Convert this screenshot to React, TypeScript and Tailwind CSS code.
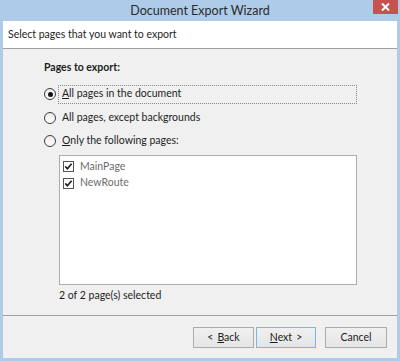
import React from "react";

const font = { fontFamily: 'Lato, "Open Sans", sans-serif' };

function Radio({ checked }: { checked?: boolean }) {
  return (
    <span className="w-[12px] h-[12px] rounded-full border border-[#3c3c3c] bg-gradient-to-b from-[#ececec] to-[#ffffff] flex items-center justify-center shrink-0">
      {checked && <span className="w-[5px] h-[5px] rounded-full bg-[#111111]" />}
    </span>
  );
}

function Check() {
  return (
    <span className="w-[11px] h-[11px] border border-[#555555] bg-white flex items-center justify-center shrink-0">
      <svg width="9" height="9" viewBox="0 0 9 9">
        <path d="M1.3 4.4 L3.4 6.7 L7.6 1.8" fill="none" stroke="#1a1a1a" strokeWidth="1.6" />
      </svg>
    </span>
  );
}

export default function App() {
  return (
    <div className="w-[400px] h-[361px] bg-[#aecbea] flex flex-col text-[10.5px] text-[#1e1e1e]" style={font}>
      <div className="h-[21px] relative flex items-center justify-center">
        <span className="text-[12.5px] text-[#2b2b2b] leading-none mt-[1px]">Document Export Wizard</span>
        <div className="absolute right-[2px] top-0 w-[25px] h-[14px] bg-[#c75050] flex items-center justify-center">
          <svg width="9" height="8" viewBox="0 0 9 8">
            <path d="M1 0.5 L8 7.5 M8 0.5 L1 7.5" stroke="white" strokeWidth="2" />
          </svg>
        </div>
      </div>
      <div className="flex-1 mx-[3px] mb-[3px] bg-[#f0f0f0] flex flex-col">
        <div className="h-[28px] bg-white border-b border-[#a0a0a0] flex items-center pl-[5px]">
          <span>Select pages that you want to export</span>
        </div>
        <div className="flex-1 flex flex-col pl-[41px] pr-[40px] pt-[10px]">
          <div className="font-bold h-[16px] leading-[16px]">Pages to export:</div>
          <div className="mt-[9.5px] flex flex-col gap-[4.5px]">
            <div className="flex items-center gap-[2px] h-[19px]">
              <Radio checked />
              <span className="flex-1 border border-dotted border-[#888] h-[19px] flex items-center pl-[3px]">
                <span><u>A</u>ll pages in the document</span>
              </span>
            </div>
            <div className="flex items-center gap-[6px] h-[19px]">
              <Radio />
              <span>All pa<u>g</u>es, except backgrounds</span>
            </div>
            <div className="flex items-center gap-[6px] h-[19px]">
              <Radio />
              <span><u>O</u>nly the following pages:</span>
            </div>
          </div>
          <div className="ml-[15px] mt-[4.5px] h-[130px] bg-white border border-[#abadb3] flex flex-col pt-[5px] pl-[3px] gap-[5.5px]">
            <div className="flex items-center gap-[6px] h-[11px]">
              <Check />
              <span className="text-[#6d6d6d]">MainPage</span>
            </div>
            <div className="flex items-center gap-[6px] h-[11px]">
              <Check />
              <span className="text-[#6d6d6d]">NewRoute</span>
            </div>
          </div>
          <div className="ml-[15px] mt-[3px] h-[14px] leading-[14px]">2 of 2 page(s) selected</div>
        </div>
        <div className="h-[43px] border-t border-[#a0a0a0] flex items-start justify-end pr-[10px] pt-[11px]">
          <button className="w-[61px] h-[21px] border border-[#acacac] bg-gradient-to-b from-[#f0f0f0] to-[#e5e5e5] flex items-center justify-center">
            <span>&lt;</span>
            <span className="ml-[4px]"><u>B</u>ack</span>
          </button>
          <button className="ml-[2px] w-[60px] h-[21px] border border-[#7eb4ea] bg-gradient-to-b from-[#f0f0f0] to-[#e5e5e5] flex items-center justify-center">
            <span><u>N</u>ext</span>
            <span className="ml-[4px]">&gt;</span>
          </button>
          <button className="ml-[9px] w-[62px] h-[21px] border border-[#acacac] bg-gradient-to-b from-[#f0f0f0] to-[#e5e5e5] flex items-center justify-center">
            Cancel
          </button>
        </div>
      </div>
    </div>
  );
}
